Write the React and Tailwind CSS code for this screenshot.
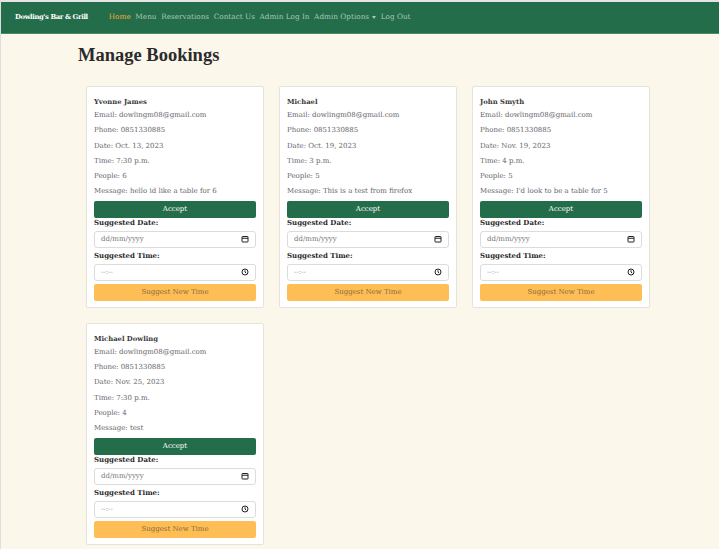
import React from 'react';

const bookings = [
  { name: 'Yvonne James', date: 'Oct. 13, 2023', time: '7:30 p.m.', people: 6, message: 'hello id like a table for 6' },
  { name: 'Michael', date: 'Oct. 19, 2023', time: '3 p.m.', people: 5, message: 'This is a test from firefox' },
  { name: 'John Smyth', date: 'Nov. 19, 2023', time: '4 p.m.', people: 5, message: "I'd look to be a table for 5" },
  { name: 'Michael Dowling', date: 'Nov. 25, 2023', time: '7:30 p.m.', people: 4, message: 'test' },
];

const serif = { fontFamily: '"DejaVu Serif", "Liberation Serif", serif' };

const CalendarIcon = () => (
  <svg width="8" height="8" viewBox="0 0 16 16" fill="none" stroke="#222" strokeWidth="2">
    <rect x="2" y="3" width="12" height="11" rx="1" />
    <line x1="2" y1="6.5" x2="14" y2="6.5" />
  </svg>
);

const ClockIcon = () => (
  <svg width="8" height="8" viewBox="0 0 16 16" fill="none" stroke="#222" strokeWidth="2">
    <circle cx="8" cy="8" r="6" />
    <path d="M8 4.5V8l2.5 2.5" />
  </svg>
);

const BookingCard = ({ booking }) => (
  <div className="w-[178px] bg-white border border-[#e6e3da] rounded-[2px] px-[7px] pt-[11px] pb-[6px] text-[7px]">
    <div className="text-[6.8px] font-bold text-[#3a3a3a] leading-[9px] mb-[1px]">{booking.name}</div>
    <div className="text-[7px] text-[#66666e] leading-[15.3px]">
      <div>Email: dowlingm08@gmail.com</div>
      <div>Phone: 0851330885</div>
      <div>Date: {booking.date}</div>
      <div>Time: {booking.time}</div>
      <div>People: {booking.people}</div>
      <div>Message: {booking.message}</div>
    </div>
    <button className="block mt-[1px] w-full h-[17px] bg-[#236d4a] text-white text-[7px] rounded-[2px] leading-none" style={serif}>
      Accept
    </button>
    <div className="text-[7px] font-bold text-[#2a2a2a] leading-[10px]">Suggested Date:</div>
    <div className="mt-[3px] h-[17px] border border-[#dcdcdc] rounded-[3px] bg-white flex items-center justify-between px-[6px]">
      <span className="text-[7px] text-[#777777]">dd/mm/yyyy</span>
      <CalendarIcon />
    </div>
    <div className="text-[7px] font-bold text-[#2a2a2a] leading-[10px] mt-[3px]">Suggested Time:</div>
    <div className="mt-[3px] h-[17px] border border-[#dcdcdc] rounded-[3px] bg-white flex items-center justify-between px-[6px]">
      <span className="text-[7px] text-[#9a9a9a]">--:--</span>
      <ClockIcon />
    </div>
    <button className="block mt-[3px] w-full h-[17px] bg-[#ffbe55] text-[#8a6a3a] text-[7px] rounded-[2px] leading-none" style={serif}>
      Suggest New Time
    </button>
  </div>
);

export default function App() {
  const links = ['Menu', 'Reservations', 'Contact Us', 'Admin Log In'];
  return (
    <div className="min-h-[549px] bg-[#fcf7eb] border-l border-[#dedede]" style={serif}>
      <div className="h-[2px] bg-[#e4e4e4]" />
      <nav className="h-[32px] bg-[#236d4a] border-b border-[#4a8a6a] flex items-center px-[14px]">
        <span className="text-[6.8px] font-bold text-white tracking-[-0.4px]">Dowling's Bar &amp; Grill</span>
        <div className="ml-[21px] flex items-center gap-[4.6px] text-[7.3px]">
          <span className="text-[#f5a83a]">Home</span>
          {links.map(l => (
            <span key={l} className="text-[#a9c8b6]">{l}</span>
          ))}
          <span className="text-[#a9c8b6] flex items-center gap-[3px]">
            Admin Options
            <span className="inline-block w-0 h-0 border-l-[2.5px] border-r-[2.5px] border-t-[3px] border-l-transparent border-r-transparent border-t-[#a9c8b6]" />
          </span>
          <span className="text-[#a9c8b6]">Log Out</span>
        </div>
      </nav>
      <div className="pl-[77px] pt-[9px]">
        <h1
          className="text-[18.5px] text-[#2b2b2b] font-bold leading-[24px]"
          style={{ fontFamily: '"Liberation Serif", serif' }}
        >
          Manage Bookings
        </h1>
        <div className="mt-[19px] ml-[8px] flex flex-wrap w-[570px] gap-x-[15px] gap-y-[15px]">
          {bookings.map(b => (
            <BookingCard key={b.name} booking={b} />
          ))}
        </div>
      </div>
    </div>
  );
}
